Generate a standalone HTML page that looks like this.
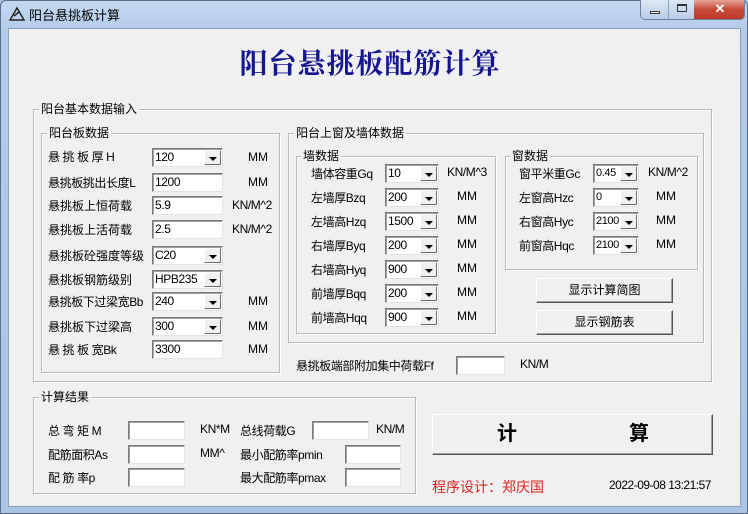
<!DOCTYPE html>
<html><head><meta charset="utf-8"><style>
*{margin:0;padding:0;box-sizing:border-box}
body{width:748px;height:514px;overflow:hidden;background:#a9c6e8;font-family:"Liberation Sans","Noto Sans CJK SC",sans-serif;font-size:12px;color:#000;position:relative}
.a{position:absolute;white-space:nowrap}
#frame{position:absolute;left:0;top:0;width:748px;height:514px;background:linear-gradient(#c5d9f1,#b3cbe8 30px,#aac4e6);border:1px solid #5a6f8a;border-radius:6px 6px 0 0}
#client{position:absolute;left:8px;top:28px;width:733px;height:479px;background:#f0f0f0;border:1px solid #8aa0bd}
.g{position:absolute;border:1px solid #b9b9b9;box-shadow:1px 1px 0 #fff inset,1px 1px 0 #fff}
.gl{position:absolute;background:#f0f0f0;padding:0 2px;top:-9px;left:5px;font-size:12px;line-height:16px}
.in{position:absolute;height:19px;background:#fff;border:1px solid #7a7a7a;border-right-color:#e3e3e3;border-bottom-color:#e3e3e3;box-shadow:1px 1px 0 #a0a0a0 inset;font-size:12px;line-height:17px;padding-left:2px;overflow:hidden;letter-spacing:-0.4px}
.dd{position:absolute;right:1px;top:1px;width:17px;height:15px;background:#f0f0f0;border:1px solid #fff;border-right-color:#6d6d6d;border-bottom-color:#6d6d6d}
.dd:after{content:"";position:absolute;left:4px;top:6px;border-left:4px solid transparent;border-right:4px solid transparent;border-top:4px solid #000}
.btn{position:absolute;background:#f0f0f0;border:1px solid #fff;border-right-color:#555;border-bottom-color:#555;box-shadow:-1px -1px 0 #a0a0a0 inset;text-align:center}
.n{letter-spacing:-0.4px}
</style></head><body>
<div id="frame"></div>
<svg class="a" style="left:8px;top:6px" width="18" height="16" viewBox="0 0 18 16"><path d="M2 14 L9 2 L16 14 Z" fill="none" stroke="#222" stroke-width="1.5"/><path d="M6 10 L11 6" stroke="#222" stroke-width="1.5"/></svg>
<div class="a" style="left:29px;top:5px;font-size:13px">阳台悬挑板计算</div>
<div class="a" style="left:640px;top:0;width:105px;height:20px;border-radius:0 0 5px 5px;overflow:hidden;border:1px solid #6e80a0;border-top:none">
<div class="a" style="left:0;top:0;width:27px;height:19px;background:linear-gradient(#dde8f5,#b8cce6)"><div class="a" style="left:9px;top:11px;width:10px;height:3px;border:1px solid #333;background:#fff"></div></div>
<div class="a" style="left:27px;top:0;width:26px;height:19px;background:linear-gradient(#dde8f5,#b8cce6);border-left:1px solid #8aa"><div class="a" style="left:8px;top:4px;width:10px;height:8px;border:1px solid #333;border-top-width:2px"></div></div>
<div class="a" style="left:53px;top:0;width:52px;height:19px;background:linear-gradient(#e8a398,#c74a36 50%,#c0392b);color:#fff;font-weight:bold;text-align:center;line-height:18px;font-size:13px">✕</div></div>
<div id="client"></div>
<div class="a" style="left:0;top:42px;width:740px;text-align:center;font-family:'Noto Serif CJK SC',serif;font-size:28px;font-weight:bold;color:#161690;letter-spacing:1px">阳台悬挑板配筋计算</div>

<div class="g" style="left:33px;top:109px;width:679px;height:273px"><div class="gl">阳台基本数据输入</div></div>
<div class="g" style="left:41px;top:133px;width:239px;height:240px"><div class="gl">阳台板数据</div></div>
<div class="a n" style="left:48px;top:149px;line-height:16px">悬 挑 板 厚 H</div>
<div class="a n" style="left:48px;top:174px">悬挑板挑出长度L</div>
<div class="a" style="left:48px;top:197px">悬挑板上恒荷载</div>
<div class="a" style="left:48px;top:221px">悬挑板上活荷载</div>
<div class="a" style="left:48px;top:247px">悬挑板砼强度等级</div>
<div class="a" style="left:48px;top:271px">悬挑板钢筋级别</div>
<div class="a n" style="left:48px;top:293px">悬挑板下过梁宽Bb</div>
<div class="a" style="left:48px;top:318px">悬挑板下过梁高</div>
<div class="a n" style="left:48px;top:341px">悬 挑 板 宽Bk</div>
<div class="in" style="left:152px;top:148px;width:71px">120<div class="dd"></div></div>
<div class="in" style="left:152px;top:173px;width:71px">1200</div>
<div class="in" style="left:152px;top:196px;width:71px">5.9</div>
<div class="in" style="left:152px;top:220px;width:71px">2.5</div>
<div class="in" style="left:152px;top:246px;width:71px">C20<div class="dd"></div></div>
<div class="in" style="left:152px;top:270px;width:71px">HPB235<div class="dd"></div></div>
<div class="in" style="left:152px;top:292px;width:71px">240<div class="dd"></div></div>
<div class="in" style="left:152px;top:317px;width:71px">300<div class="dd"></div></div>
<div class="in" style="left:152px;top:340px;width:71px">3300</div>
<div class="a" style="left:248px;top:150px">MM</div>
<div class="a" style="left:248px;top:175px">MM</div>
<div class="a n" style="left:232px;top:198px">KN/M^2</div>
<div class="a n" style="left:232px;top:222px">KN/M^2</div>
<div class="a" style="left:248px;top:294px">MM</div>
<div class="a" style="left:248px;top:319px">MM</div>
<div class="a" style="left:248px;top:342px">MM</div>

<div class="g" style="left:288px;top:133px;width:416px;height:210px"><div class="gl">阳台上窗及墙体数据</div></div>
<div class="g" style="left:296px;top:156px;width:200px;height:178px"><div class="gl" style="left:4px">墙数据</div></div>
<div class="g" style="left:505px;top:156px;width:193px;height:114px"><div class="gl" style="left:4px">窗数据</div></div>
<div class="a n" style="left:311px;top:165px">墙体容重Gq</div>
<div class="a n" style="left:311px;top:189px">左墙厚Bzq</div>
<div class="a n" style="left:311px;top:213px">左墙高Hzq</div>
<div class="a n" style="left:311px;top:237px">右墙厚Byq</div>
<div class="a n" style="left:311px;top:261px">右墙高Hyq</div>
<div class="a n" style="left:311px;top:285px">前墙厚Bqq</div>
<div class="a n" style="left:311px;top:309px">前墙高Hqq</div>
<div class="in" style="left:385px;top:164px;width:54px">10<div class="dd"></div></div>
<div class="in" style="left:385px;top:188px;width:54px">200<div class="dd"></div></div>
<div class="in" style="left:385px;top:212px;width:54px">1500<div class="dd"></div></div>
<div class="in" style="left:385px;top:236px;width:54px">200<div class="dd"></div></div>
<div class="in" style="left:385px;top:260px;width:54px">900<div class="dd"></div></div>
<div class="in" style="left:385px;top:284px;width:54px">200<div class="dd"></div></div>
<div class="in" style="left:385px;top:308px;width:54px">900<div class="dd"></div></div>
<div class="a n" style="left:447px;top:165px">KN/M^3</div>
<div class="a" style="left:457px;top:189px">MM</div>
<div class="a" style="left:457px;top:213px">MM</div>
<div class="a" style="left:457px;top:237px">MM</div>
<div class="a" style="left:457px;top:261px">MM</div>
<div class="a" style="left:457px;top:285px">MM</div>
<div class="a" style="left:457px;top:309px">MM</div>
<div class="a n" style="left:519px;top:165px">窗平米重Gc</div>
<div class="a n" style="left:519px;top:189px">左窗高Hzc</div>
<div class="a n" style="left:519px;top:213px">右窗高Hyc</div>
<div class="a n" style="left:519px;top:237px">前窗高Hqc</div>
<div class="in" style="left:593px;top:164px;width:46px;font-size:11px">0.45<div class="dd"></div></div>
<div class="in" style="left:593px;top:188px;width:46px;font-size:11px">0<div class="dd"></div></div>
<div class="in" style="left:593px;top:212px;width:46px;font-size:11px">2100<div class="dd"></div></div>
<div class="in" style="left:593px;top:236px;width:46px;font-size:11px">2100<div class="dd"></div></div>
<div class="a n" style="left:648px;top:165px">KN/M^2</div>
<div class="a" style="left:656px;top:189px">MM</div>
<div class="a" style="left:656px;top:213px">MM</div>
<div class="a" style="left:656px;top:237px">MM</div>
<div class="btn" style="left:536px;top:278px;width:137px;height:25px;line-height:22px">显示计算简图</div>
<div class="btn" style="left:536px;top:310px;width:137px;height:25px;line-height:22px">显示钢筋表</div>
<div class="a n" style="left:296px;top:357px">悬挑板端部附加集中荷载Ff</div>
<div class="in" style="left:456px;top:356px;width:49px"></div>
<div class="a n" style="left:520px;top:357px">KN/M</div>

<div class="g" style="left:33px;top:397px;width:383px;height:97px"><div class="gl">计算结果</div></div>
<div class="a n" style="left:48px;top:422px">总 弯 矩 M</div>
<div class="a n" style="left:48px;top:446px">配筋面积As</div>
<div class="a n" style="left:48px;top:469px">配 筋 率p</div>
<div class="in" style="left:128px;top:421px;width:57px"></div>
<div class="in" style="left:128px;top:445px;width:57px"></div>
<div class="in" style="left:128px;top:468px;width:57px"></div>
<div class="a n" style="left:200px;top:422px">KN*M</div>
<div class="a n" style="left:200px;top:446px">MM^</div>
<div class="a n" style="left:240px;top:422px">总线荷载G</div>
<div class="a n" style="left:240px;top:446px">最小配筋率pmin</div>
<div class="a n" style="left:240px;top:469px">最大配筋率pmax</div>
<div class="in" style="left:312px;top:421px;width:57px"></div>
<div class="in" style="left:345px;top:445px;width:56px"></div>
<div class="in" style="left:345px;top:468px;width:56px"></div>
<div class="a n" style="left:376px;top:422px">KN/M</div>

<div class="btn" style="left:432px;top:414px;width:281px;height:41px;font-size:20px;font-weight:bold;line-height:38px"><span class="a" style="left:64px">计</span><span class="a" style="left:196px">算</span></div>
<div class="a" style="left:432px;top:477px;font-size:14px;color:#d22">程序设计：郑庆国</div>
<div class="a" style="left:609px;top:478px;font-size:12px;letter-spacing:-0.5px">2022-09-08 13:21:57</div>
</body></html>
